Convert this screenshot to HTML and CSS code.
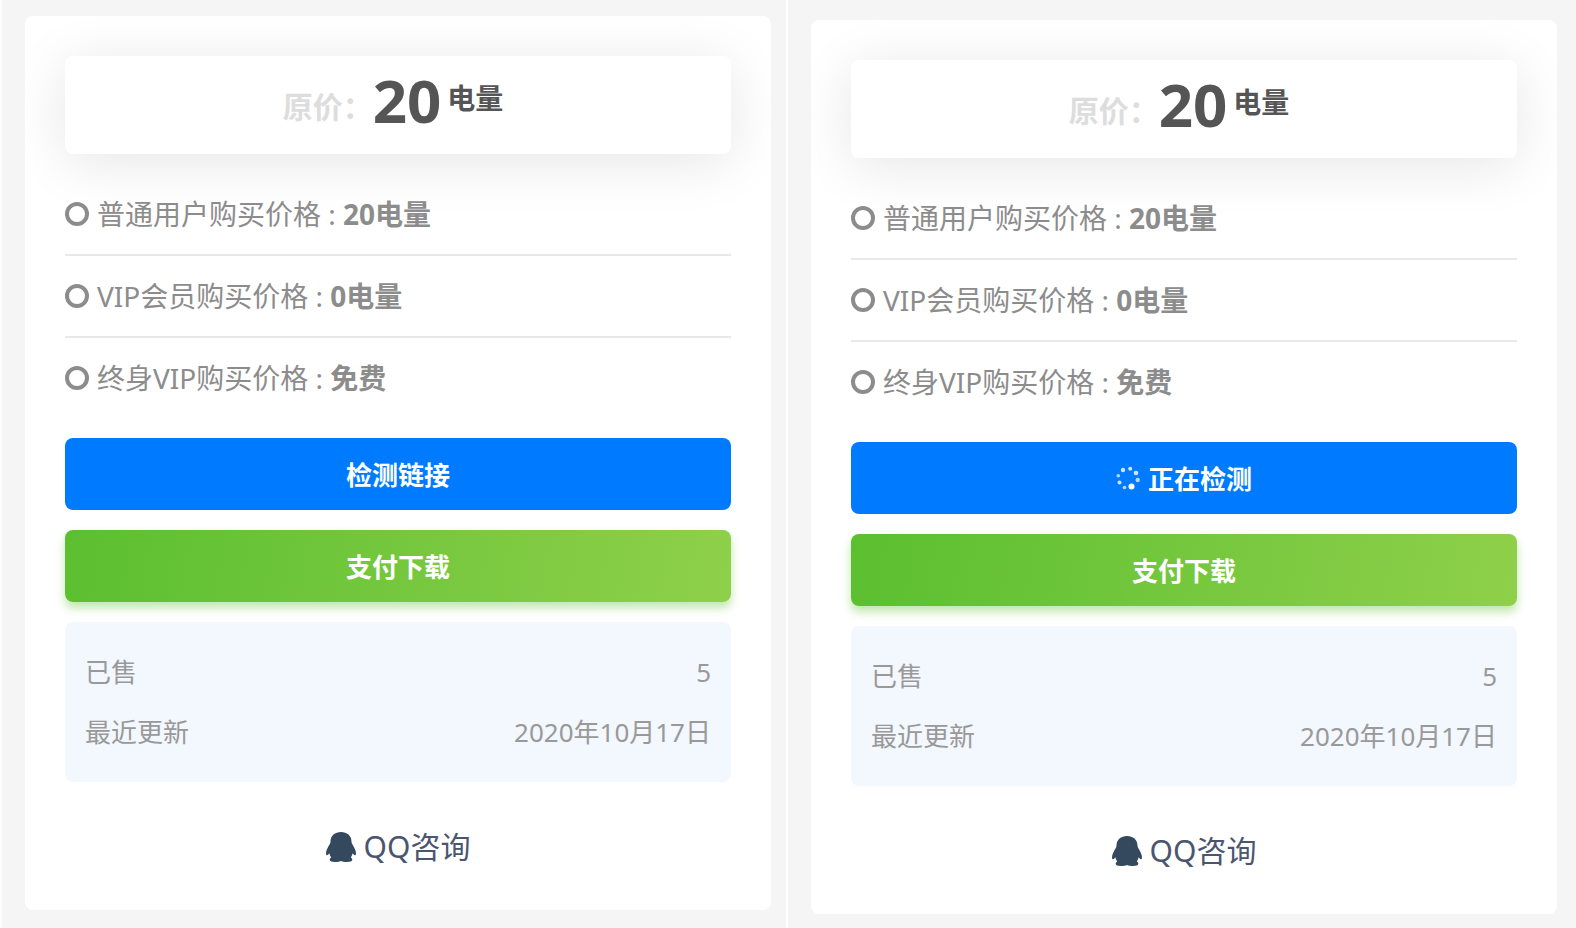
FILE: index.html
```html
<!DOCTYPE html>
<html lang="zh-CN">
<head>
<meta charset="utf-8">
<title>支付下载</title>
<link rel="stylesheet" href="styles.css">
</head>
<body>
<main class="compare">
  <div class="pane">
    <section class="card">
      <div class="price"><span class="price-label">原价：</span><strong class="price-value">20</strong><span class="price-unit">电量</span></div>
      <ul class="plans">
        <li class="plan"><i class="ring"></i><span>普通用户购买价格 : <b>20电量</b></span></li>
        <li class="plan"><i class="ring"></i><span>VIP会员购买价格 : <b>0电量</b></span></li>
        <li class="plan"><i class="ring"></i><span>终身VIP购买价格 : <b>免费</b></span></li>
      </ul>
      <button class="btn btn-check" type="button">检测链接</button>
      <button class="btn btn-pay" type="button">支付下载</button>
      <dl class="info">
        <div class="info-row"><dt>已售</dt><dd>5</dd></div>
        <div class="info-row"><dt>最近更新</dt><dd>2020年10月17日</dd></div>
      </dl>
      <a class="qq" href="#">
        <svg class="qq-icon" viewBox="0 0 30 30" aria-hidden="true"><path d="M15 0C9 0 4.500 3.800 4.500 9.500c0 1-.2 1.800-.7 2.600C2 15 0 18.600 0 21.500c0 1.400.6 1.900 1.200 1.700.7-.2 1.500-.9 2.200-1.900.3 1.700.9 2.900 1.800 4.100-1 .6-1.500 1.400-1.500 2.400C3.700 29.400 5.800 30 9 30c2.400 0 4.600-.3 6-1 1.400.7 3.600 1 6 1 3.200 0 5.300-.6 5.300-2.200 0-1-.5-1.800-1.500-2.400.9-1.200 1.500-2.400 1.800-4.100.7 1 1.500 1.700 2.200 1.900.6.200 1.200-.3 1.200-1.700 0-2.900-2-6.500-3.800-9.400-.5-.8-.7-1.600-.7-2.600C25.500 3.800 21 0 15 0z"/></svg>
        <span>QQ咨询</span>
      </a>
    </section>
  </div>
  <div class="pane pane-loading">
    <section class="card">
      <div class="price"><span class="price-label">原价：</span><strong class="price-value">20</strong><span class="price-unit">电量</span></div>
      <ul class="plans">
        <li class="plan"><i class="ring"></i><span>普通用户购买价格 : <b>20电量</b></span></li>
        <li class="plan"><i class="ring"></i><span>VIP会员购买价格 : <b>0电量</b></span></li>
        <li class="plan"><i class="ring"></i><span>终身VIP购买价格 : <b>免费</b></span></li>
      </ul>
      <button class="btn btn-check" type="button">
        <svg class="spinner" viewBox="0 0 24 24" aria-hidden="true"><circle cx="15.500" cy="20.500" r="3"/><circle cx="8.500" cy="21.500" r="1.800" opacity=".7"/><circle cx="3.500" cy="16.500" r="2" opacity=".8"/><circle cx="2.300" cy="9.800" r="1.800" opacity=".7"/><circle cx="7" cy="4" r="2.200" opacity=".8"/><circle cx="14.200" cy="2.800" r="2" opacity=".8"/><circle cx="20" cy="7" r="2.300" opacity=".8"/><circle cx="21.700" cy="14" r="2.200" opacity=".7"/></svg>
        <span>正在检测</span>
      </button>
      <button class="btn btn-pay" type="button">支付下载</button>
      <dl class="info">
        <div class="info-row"><dt>已售</dt><dd>5</dd></div>
        <div class="info-row"><dt>最近更新</dt><dd>2020年10月17日</dd></div>
      </dl>
      <a class="qq" href="#">
        <svg class="qq-icon" viewBox="0 0 30 30" aria-hidden="true"><path d="M15 0C9 0 4.500 3.800 4.500 9.500c0 1-.2 1.800-.7 2.600C2 15 0 18.600 0 21.500c0 1.400.6 1.900 1.200 1.700.7-.2 1.500-.9 2.200-1.900.3 1.700.9 2.900 1.800 4.100-1 .6-1.500 1.400-1.500 2.400C3.700 29.400 5.800 30 9 30c2.400 0 4.600-.3 6-1 1.400.7 3.600 1 6 1 3.200 0 5.300-.6 5.300-2.200 0-1-.5-1.800-1.500-2.400.9-1.200 1.500-2.400 1.800-4.100.7 1 1.500 1.700 2.200 1.900.6.200 1.200-.3 1.200-1.700 0-2.900-2-6.500-3.800-9.400-.5-.8-.7-1.600-.7-2.600C25.500 3.800 21 0 15 0z"/></svg>
        <span>QQ咨询</span>
      </a>
    </section>
  </div>
</main>
</body>
</html>
```

FILE: styles.css
```css
* { box-sizing: border-box; }

body {
  margin: 0;
  background: #f5f5f5;
  color: #8c8c8c;
  font-family: "Noto Sans", "Noto Sans CJK SC", sans-serif;
  font-size: 28px;
}

.compare {
  display: grid;
  grid-template-columns: 1fr 1fr;
  min-height: 100vh;
}

.pane {
  padding: 16px 15px 16px 23px;
  border-right: 2px solid #fff;
  border-left: 2px solid #fcfcfc;
}

.pane-loading {
  padding: 20px 19px 12px 23px;
  border: 0;
}

.card {
  padding: 40px 40px 38px;
  border-radius: 8px;
  background: #fff;
  overflow: hidden;
}

.price {
  display: flex;
  justify-content: center;
  align-items: flex-start;
  height: 98px;
  padding-right: 10px;
  border-radius: 8px;
  background: #fff;
  box-shadow: 0 8px 56px rgba(0, 0, 0, .1);
  font-weight: 700;
}

.price-label {
  padding-top: 30px;
  color: #ddd;
  font-size: 30px;
  line-height: 42px;
}

.price-value {
  color: #555;
  font-size: 60px;
  font-weight: 700;
  line-height: 88px;
}

.price-unit {
  padding: 22px 0 0 6px;
  color: #555;
  line-height: 40px;
}

.plans {
  margin: 20px 0 18px;
  padding: 0;
  list-style: none;
}

.plan {
  display: flex;
  align-items: center;
  gap: 8px;
  height: 82px;
  border-bottom: 2px solid #e8e8e8;
  line-height: 40px;
}

.plan:last-child { border-bottom-color: transparent; }

.ring {
  width: 24px;
  height: 24px;
  border: 4px solid #8c8c8c;
  border-radius: 50%;
}

.btn {
  display: flex;
  justify-content: center;
  align-items: center;
  gap: 8px;
  width: 100%;
  height: 72px;
  margin: 0 0 20px;
  padding: 0;
  border: 0;
  border-radius: 8px;
  color: #fff;
  font-family: inherit;
  font-size: 26px;
  font-weight: 700;
  cursor: pointer;
}

.btn-check { background: #007bff; }

.btn-pay {
  background: linear-gradient(100deg, #5bbf30, #8fd04a);
  box-shadow: 0 6px 10px rgba(100, 196, 50, .4);
}

.spinner {
  width: 24px;
  height: 24px;
  fill: #fff;
}

.info {
  margin: 0;
  padding: 20px;
  border-radius: 8px;
  background: #f3f7fe;
  color: #999;
  font-size: 26px;
  line-height: 60px;
}

.info-row {
  display: flex;
  justify-content: space-between;
}

.info-row dd { margin: 0; }

.qq {
  display: flex;
  justify-content: center;
  align-items: center;
  gap: 8px;
  margin-top: 40px;
  color: #4a5670;
  font-size: 30px;
  line-height: 50px;
  text-decoration: none;
}

.qq-icon {
  width: 30px;
  height: 30px;
  fill: #34495e;
}
```
